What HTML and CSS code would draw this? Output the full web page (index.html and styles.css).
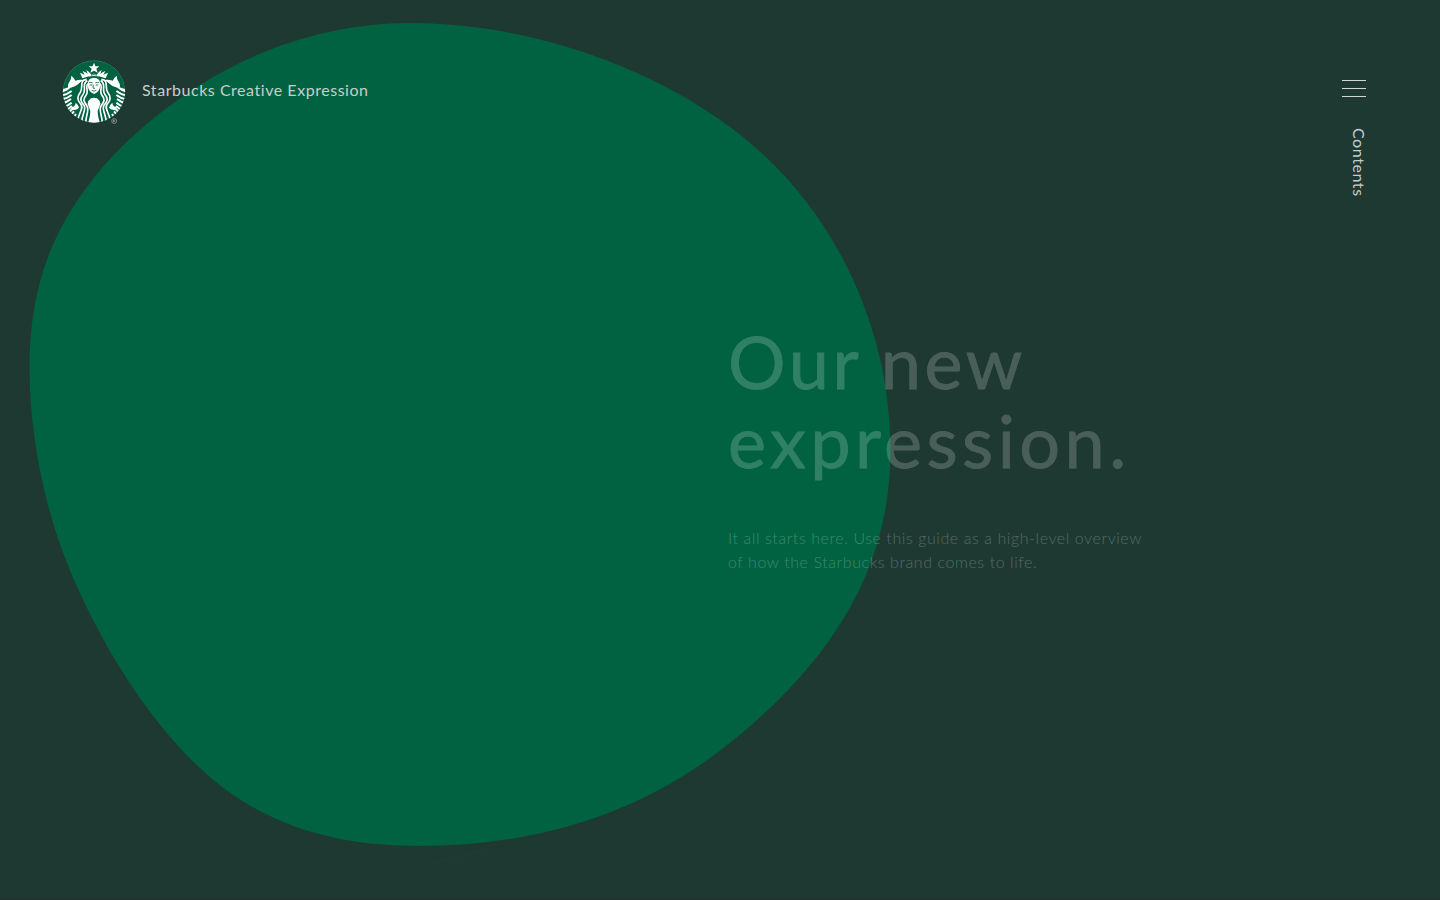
FILE: index.html
```html
<!DOCTYPE html>
<html lang="en">
<head>
<meta charset="utf-8">
<title>Starbucks Creative Expression</title>
<link rel="stylesheet" href="styles.css">
</head>
<body>
<div class="page">
  <svg class="blob" viewBox="0 0 1440 900" aria-hidden="true">
    <path class="blob-shape" d="M410 23C530 23 658 68 743 137C840 215 890.500 335 890.500 450C890.500 565 836 662 717 753C625 822 520 846 420 846C335 846 262 826 200 768C150 722 100 645 67 563C43 503 29.500 430 29.500 368C29.500 298 46 240 90 183C117 147 157 112 200 85C262 46 335 23 410 23Z"/>
    <path class="blob-trace" d="M428 865Q455 858 484 849"/>
  </svg>
  <header class="header">
    <a class="brand">
      <svg class="logo" viewBox="0 0 240 240" role="img" aria-label="Starbucks">
        <defs>
          <clipPath id="disc"><circle cx="120" cy="118.500" r="93.500"/></clipPath>
          <g id="side">
            <path class="w" d="M43 106Q40 98 46 90Q52 82 52 71Q60 77 64 86Q76 81 91 84Q79 88 72 97Q64 105 50 107L38 116L22 122V112Q36 110 43 106Z"/>
            <path class="s" d="M20 131Q37 129 53 117M20 142Q38 141 53 129M23 153.500Q39 151 51 141M28 165Q41 162 53 152M34 175Q45 171 54 162M40 184Q49 178 55 171M48 192L60 178M56 200L66 186"/>
            <path class="w" d="M65 152Q75 160 75 167Q68 176 56 174Q50 172 53 166Q64 163 65 152Z"/>
            <path class="s hair" d="M98 82C74 84 89 107 79 121C69 134 70 146 80 156C91 169 75 179 71 206M100 86C82 95 98 112 87.500 127C76 141 80.500 149 89.500 159C99 171 84 184 83 212M102 95C92 104 106 117 96 130C84.500 143 91 151 99 162C107 174 95 190 95 214"/>
          </g>
        </defs>
        <g clip-path="url(#disc)">
          <circle class="g" cx="120" cy="118.500" r="94"/>
          <use href="#side"/>
          <use href="#side" transform="translate(240 0) scale(-1 1)"/>
          <path class="w" d="M120 32L124.500 43H136L127 50L131 62L120 56L109 62L113 50L104 43H115.500Z"/>
          <path class="w" d="M85 79L78 62Q86 64 92 69L86 57Q95 60 101 66L97 54Q107 60 112 68Q120 62 128 68Q133 60 143 54L139 66Q145 60 154 57L148 69Q154 64 162 62L155 79Q120 65 85 79Z"/>
          <path class="g-line" d="M111 69.500Q120 66 129 69.500"/>
          <path class="w" d="M102 91Q104 78 120 77Q136 78 138 91V105Q136 120 120 126Q104 120 102 105Z"/>
          <path class="g-line" d="M105 92Q110 90 116 93M124 93Q130 90 135 92M107 99H115M125 99H133M118 98L117 108Q120 111 123 108M113 115Q120 120 127 115"/>
          <path class="w" d="M111 139Q120 135 129 139Q140 147 139 157Q135 166 131 177Q131 191 138 215H102Q109 191 109 177Q105 166 101 157Q100 147 111 139Z"/>
          <circle class="rim" cx="120" cy="118.500" r="93"/>
        </g>
        <g class="reg"><circle cx="180.500" cy="207" r="7.500"/><path d="M178 211V204H181Q184 206 181 208H178M181 208L184 211"/></g>
      </svg>
      <span class="brand-name">Starbucks Creative Expression</span>
    </a>
    <div class="menu">
      <div class="bars"><i class="bar"></i><i class="bar"></i><i class="bar"></i></div>
      <span class="menu-label">Contents</span>
    </div>
  </header>
  <main class="hero">
    <h1 class="title"><span class="line one">Our new</span><span class="line two">expression.</span></h1>
    <p class="intro"><span class="line">It all starts here. Use this guide as a high-level overview</span><span class="line">of how the Starbucks brand comes to life.</span></p>
  </main>
  <div class="edge"></div>
</div>
</body>
</html>
```
FILE: styles.css
```css
* { box-sizing: border-box; }
body { margin: 0; background: #1e3932; font-family: Lato, "Open Sans", sans-serif; }
.page { position: relative; display: flex; flex-direction: column; height: 900px; overflow: hidden; background: #1e3932; }
.blob { position: absolute; inset: 0; width: 1440px; height: 900px; }
.blob-shape { fill: #006241; }
.blob-trace { fill: none; stroke: #006241; stroke-width: 1; opacity: .2; }
.header { position: relative; display: flex; justify-content: space-between; align-items: flex-start; height: 220px; padding: 52px 74px 0 54px; }
.brand { display: flex; align-items: center; gap: 8px; }
.logo { display: block; width: 80px; height: 80px; }
.w { fill: #fff; }
.g { fill: #006241; }
.s { fill: none; stroke: #fff; stroke-width: 6; }
.hair { stroke-width: 5; }
.g-line { fill: none; stroke: #006241; stroke-width: 2.5; }
.rim { fill: none; stroke: #fff; stroke-width: 1.2; opacity: .5; }
.reg { fill: none; stroke: #b4beba; stroke-width: 1.7; }
.brand-name { margin-top: -5px; font-size: 16px; line-height: 24px; letter-spacing: .54px; color: #c7cecc; white-space: nowrap; }
.menu { display: flex; flex-direction: column; align-items: flex-end; padding-top: 28px; }
.bars { display: flex; flex-direction: column; gap: 7px; margin-bottom: 31px; }
.bar { display: block; width: 24px; height: 1px; background: #d2d7d6; }
.menu-label { margin-right: -2px; writing-mode: vertical-rl; font-size: 16px; line-height: 17px; letter-spacing: .58px; color: #c7cecc; }
.hero { position: relative; flex: 1; padding: 102px 0 0 728px; }
.title { margin: 0; font-size: 72px; font-weight: 400; line-height: 79px; color: #fff; -webkit-text-stroke: .8px #fff; opacity: .19; }
.line { display: block; width: max-content; }
.one { letter-spacing: 3.6px; word-spacing: -2px; }
.two { letter-spacing: 4.4px; }
.intro { margin: 46px 0 0; font-size: 16px; font-weight: 300; line-height: 24px; letter-spacing: .57px; color: rgba(255, 255, 255, .25); }
.edge { position: relative; height: 2px; background: #24312f; }
```
